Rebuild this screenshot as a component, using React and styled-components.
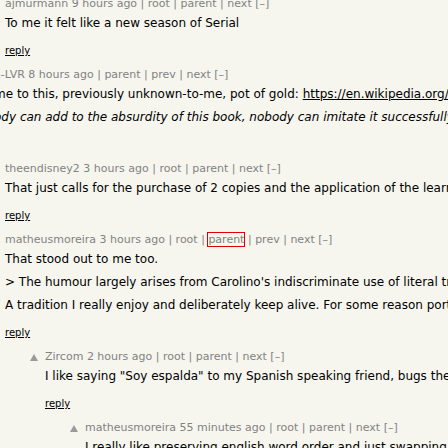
import React from 'react';
import styled, { createGlobalStyle } from 'styled-components';

const GlobalStyle = createGlobalStyle`
  html, body {
    margin: 0;
    padding: 0;
    background: #f6f6ef;
    overflow: hidden;
  }
  body {
    width: 448px;
    height: 448px;
    font-family: "DejaVu Sans", Verdana, sans-serif;
  }
`;

const Thread = styled.div`
  margin-top: -3px;
  width: 900px;
`;

const Row = styled.div`
  display: flex;
  align-items: flex-start;
  margin-left: ${p => p.$indent - 10}px;
  padding-bottom: 10px;
`;

const VoteCell = styled.div`
  width: 15px;
  flex: 0 0 15px;
  height: 14px;
  display: flex;
  align-items: center;
`;

const Arrow = styled.span`
  width: 0;
  height: 0;
  border-left: 4px solid transparent;
  border-right: 4px solid transparent;
  border-bottom: 7px solid #9a9a9a;
`;

const Body = styled.div`
  display: flex;
  flex-direction: column;
`;

const Meta = styled.div`
  font-size: 11px;
  line-height: 14px;
  color: #828282;
  white-space: nowrap;
  margin-bottom: 5px;
`;

const MetaLink = styled.span`
  color: #828282;
  outline: ${p => (p.$focused ? '1px solid #e00000' : 'none')};
  outline-offset: 0;
`;

const Text = styled.p`
  margin: 0 0 9px;
  font-size: 12px;
  line-height: 14px;
  color: #000;
  white-space: nowrap;
  font-style: ${p => (p.$italic ? 'italic' : 'normal')};
`;

const Link = styled.span`
  color: #000;
  text-decoration: underline;
`;

const Reply = styled.span`
  font-size: 10px;
  line-height: 14px;
  color: #000;
  text-decoration: underline;
  visibility: ${p => (p.$ghost ? 'hidden' : 'visible')};
`;

const Sep = () => <> | </>;

const Comment = ({ indent = 0, vote, user, age, links, focus, children, ghostReply }) => (
  <Row $indent={indent}>
    <VoteCell>{vote && <Arrow />}</VoteCell>
    <Body>
      <Meta>
        {user} {age}
        {links.map(l => (
          <React.Fragment key={l}>
            <Sep />
            <MetaLink $focused={focus === l}>{l}</MetaLink>
          </React.Fragment>
        ))}
        {' '}[–]
      </Meta>
      {children}
      <div>
        <Reply $ghost={ghostReply}>reply</Reply>
      </div>
    </Body>
  </Row>
);

export default function App() {
  return (
    <>
      <GlobalStyle />
      <Thread>
        <Comment user="ajmurmann" age="9 hours ago" links={['root', 'parent', 'next']}>
          <Text>To me it felt like a new season of Serial</Text>
        </Comment>

        <Comment indent={-11} user="a-LVR" age="8 hours ago" links={['parent', 'prev', 'next']} ghostReply>
          <Text>
            me to this, previously unknown-to-me, pot of gold:{' '}
            <Link>https://en.wikipedia.org/wiki/English_As_She_Is_Spoke</Link>
          </Text>
          <Text $italic>
            ody can add to the absurdity of this book, nobody can imitate it successfully, nobody will ever
          </Text>
        </Comment>

        <Comment user="theendisney2" age="3 hours ago" links={['root', 'parent', 'next']}>
          <Text>
            That just calls for the purchase of 2 copies and the application of the learned phrases in daily life.
          </Text>
        </Comment>

        <Comment
          user="matheusmoreira"
          age="3 hours ago"
          links={['root', 'parent', 'prev', 'next']}
          focus="parent"
        >
          <Text>That stood out to me too.</Text>
          <Text>
            &gt; The humour largely arises from Carolino's indiscriminate use of literal translation of idioms
          </Text>
          <Text>
            A tradition I really enjoy and deliberately keep alive. For some reason portuguese phrases sound funny
          </Text>
        </Comment>

        <Comment indent={40} vote user="Zircom" age="2 hours ago" links={['root', 'parent', 'next']}>
          <Text>I like saying "Soy espalda" to my Spanish speaking friend, bugs the hell out of him.</Text>
        </Comment>

        <Comment indent={80} vote user="matheusmoreira" age="55 minutes ago" links={['root', 'parent', 'next']}>
          <Text>
            I really like preserving english word order and just swapping words with their portuguese
            <br />
            and almost but not quite nonsensical, tortured yet parseable sentences. My friends always
            <br />
            find it hilarious and they play along with it every single time.
          </Text>
        </Comment>
      </Thread>
    </>
  );
}
